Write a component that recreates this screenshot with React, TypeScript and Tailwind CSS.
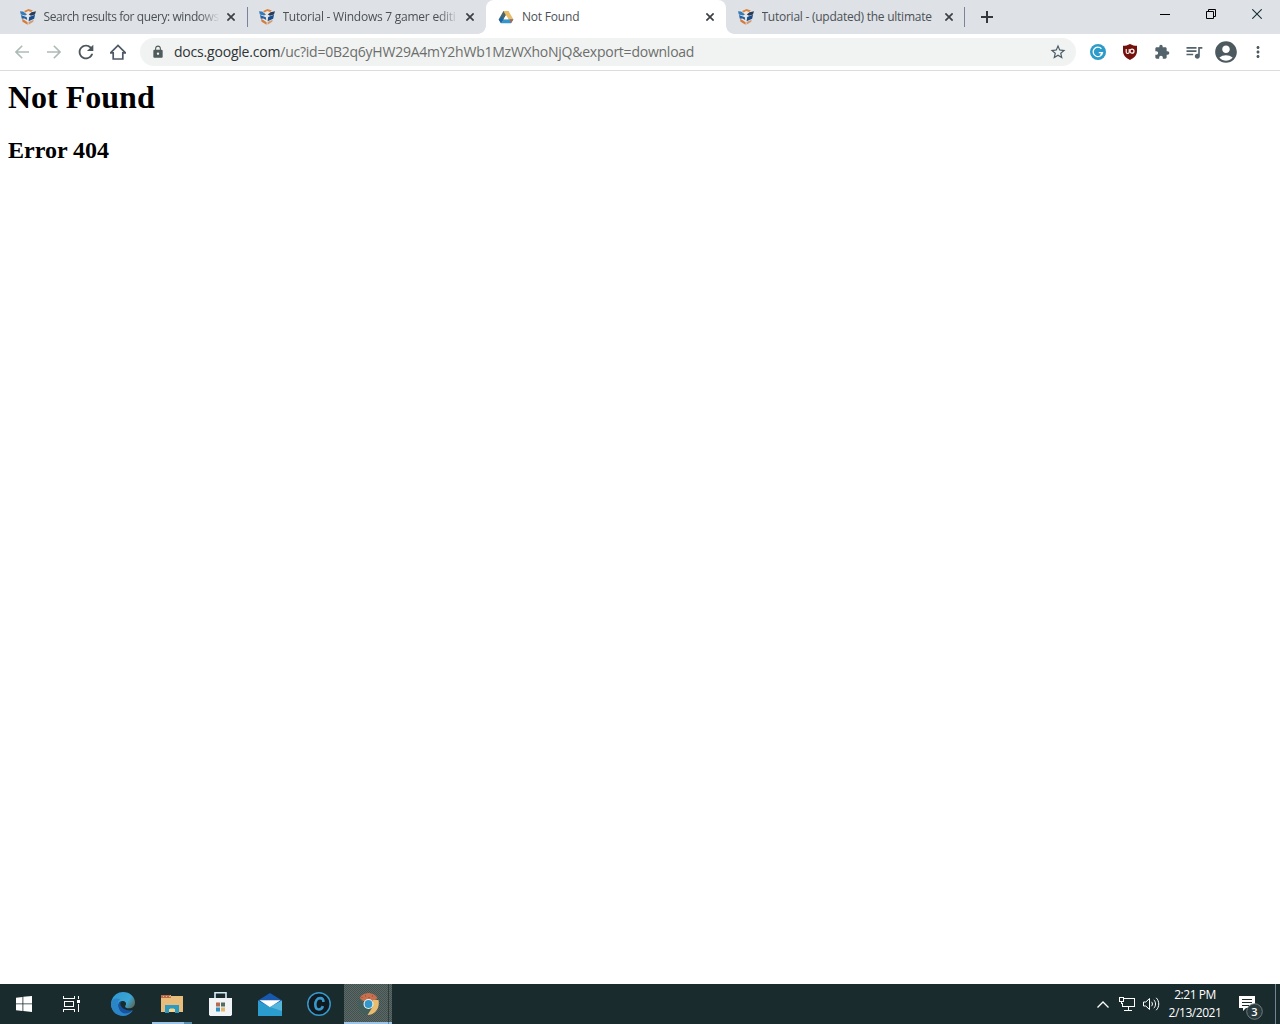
import type { ReactNode } from 'react';
import {
  MdAccountCircle,
  MdExtension,
  MdLock,
  MdMoreVert,
  MdQueueMusic,
  MdRefresh,
  MdStarBorder,
} from 'react-icons/md';

const tabs = [
  { title: 'Search results for query: windows', icon: 'forum', active: false, spacing: 'tracking-[-0.42px]' },
  { title: 'Tutorial - Windows 7 gamer editi', icon: 'forum', active: false, spacing: 'tracking-[-0.24px]' },
  { title: 'Not Found', icon: 'drive', active: true, spacing: 'tracking-[-0.2px]' },
  { title: 'Tutorial - (updated) the ultimate', icon: 'forum', active: false, spacing: 'tracking-[-0.25px]' },
];

function ForumIcon() {
  return (
    <svg width="16" height="16" viewBox="0 0 16 16">
      <path d="M0 2.5 4 .8 8.5 0 12.500.9 16 2.400 13.700 12.500 8.300 16 2.500 12.800z" fill="#e9e6e4" />
      <path d="M4 2 8.500 0 13 1.400 11 3 8.200 2 5.500 3.600z" fill="#d98545" />
      <path d="M0 2.200 3.200 2.400 7 5.400 5 6.600.8 5.600z" fill="#347bb8" />
      <path d="M16 2.300 11.500 3.200 8.800 5.400 11 6.700l4-1.200z" fill="#263c5c" />
      <path d="M1 6 6.800 8.200 7.200 11 4.500 9.600 1.800 9.800z" fill="#2260a5" />
      <path d="M15 5.800 9.200 8 8.600 12.200 14.200 9.800z" fill="#174d8d" />
      <path d="M2 10 4 10.800 7.600 13.200V15.700L2.500 12.800z" fill="#d57b3e" />
      <path d="M8.500 13 13.700 10.800 13.300 12.700 8.500 15.700z" fill="#cf9b74" />
    </svg>
  );
}

function DriveIcon() {
  return (
    <svg width="16" height="16" viewBox="0 0 16 16">
      <path d="M5.4 2h5.1L5 11.2 3 14.2.7 10.4z" fill="#4d6768" />
      <path d="M5.4 2h5.1l5 8.5h-5.1z" fill="#e9bd67" />
      <path d="M5.6 10.3h9.7L13 14.3H3.1z" fill="#3695c9" />
      <path d="M.7 10.4 3 14.3l2.6-4-1.6-3z" fill="#1868a4" />
      <path d="m12 10.3 3.4.1-2.4 3.9z" fill="#bb6148" />
      <path d="m8 6.2 2.4 4.1H5.6z" fill="#fff" />
    </svg>
  );
}

function Cross({ color }: { color: string }) {
  return (
    <svg width="8" height="8" viewBox="0 0 8 8" stroke={color} strokeWidth="1.7">
      <path d="m.4.4 7.2 7.2M7.6.4.4 7.6" />
    </svg>
  );
}

function TabStrip() {
  return (
    <div className="flex h-[34px] bg-[#dee1e6] pl-2">
      {tabs.map((tab, i) => (
        <div
          key={i}
          className={
            tab.active
              ? 'relative flex h-[34px] w-[240px] items-center rounded-t-lg bg-white px-3'
              : 'relative flex h-[34px] w-[239px] items-center pl-[11.5px] pr-3'
          }
        >
          {tab.icon === 'forum' ? <ForumIcon /> : <DriveIcon />}
          <div
            className={
              'ml-2 w-[176px] overflow-hidden whitespace-nowrap text-[12px] leading-4 text-[#4b5155] ' +
              (tab.active || i === 3 ? '' : '[mask-image:linear-gradient(to_right,black_88%,transparent)] ') +
              tab.spacing
            }
          >
            {tab.title}
          </div>
          <div className="ml-auto">
            <Cross color="#3c4043" />
          </div>
          {i === 0 && <span className="absolute -right-px top-[7px] h-5 w-px bg-[#7b829c]" />}
          {i === 3 && <span className="absolute right-0 top-[7px] h-5 w-px bg-[#7b829c]" />}
          {tab.active && (
            <>
              <span className="absolute -left-2 bottom-0 size-2 bg-[radial-gradient(circle_at_0_0,#dee1e6_7.5px,white_8px)]" />
              <span className="absolute -right-2 bottom-0 size-2 bg-[radial-gradient(circle_at_100%_0,#dee1e6_7.5px,white_8px)]" />
            </>
          )}
        </div>
      ))}
      <div className="flex w-11 items-center justify-center">
        <svg width="12" height="12" viewBox="0 0 12 12" stroke="#34383c" strokeWidth="2">
          <path d="M6 0v12M0 6h12" />
        </svg>
      </div>
      <div className="ml-auto flex h-7 items-center">
        <div className="flex w-[46px] justify-center">
          <span className="h-px w-[10px] bg-black" />
        </div>
        <div className="flex w-[46px] justify-center">
          <svg width="10" height="10" viewBox="0 0 10 10" fill="none" stroke="#000">
            <path d="M.5 2.5h7v7h-7zM2.5 2.5v-2h7v7h-2" />
          </svg>
        </div>
        <div className="flex w-[46px] justify-center">
          <svg width="10" height="10" viewBox="0 0 10 10" stroke="#123036" strokeWidth="1.1">
            <path d="m.3.3 9.400 9.400M9.700.3.3 9.700" />
          </svg>
        </div>
      </div>
    </div>
  );
}

function NavButton({ children }: { children: ReactNode }) {
  return <div className="flex size-8 items-center justify-center">{children}</div>;
}

function Toolbar() {
  return (
    <div className="flex h-[37px] items-center border-b border-[#dcdcde] bg-white pl-[6px] text-[#53636b]">
      <NavButton>
        <svg width="14" height="14" viewBox="0 0 14 14" fill="none" stroke="#aebbb5" strokeWidth="1.6">
          <path d="M14 7H1M7.2.8 1 7l6.2 6.2" />
        </svg>
      </NavButton>
      <NavButton>
        <svg width="14" height="14" viewBox="0 0 14 14" fill="none" stroke="#aebbb5" strokeWidth="1.6">
          <path d="M0 7h13M6.8.8 13 7l-6.2 6.2" />
        </svg>
      </NavButton>
      <NavButton>
        <MdRefresh size={22} color="#4d565b" />
      </NavButton>
      <NavButton>
        <svg width="16" height="16" viewBox="0 0 16 16" fill="none" stroke="#4f5865" strokeWidth="1.7">
          <path d="M.8 8.7 8 1.4l7.2 7.3M0 8.8h3.2V15h9.6V8.8H16" />
        </svg>
      </NavButton>
      <div className="ml-[6px] flex h-7 w-[936px] items-center rounded-full bg-[#f1f3f2] pl-[11px] pr-[9px]">
        <MdLock size={14} color="#4f5c5b" />
        <div className="ml-[9px] whitespace-nowrap text-[14px] leading-5 text-[#6c6e6c]">
          <span className="tracking-[-0.2px] text-[#2d3437]">docs.google.com</span>
          <span className="tracking-[-0.240px]">/uc?id=0B2q6yHW29A4mY2hWb1MzWXhoNjQ&amp;export=download</span>
        </div>
        <MdStarBorder className="ml-auto" size={18} color="#4b5c68" />
      </div>
      <div className="ml-[6px] flex items-center">
        <NavButton>
          <svg width="16" height="16" viewBox="0 0 16 16" fill="none">
            <circle cx="8" cy="8" r="8" fill="#2c9bca" />
            <path d="M11.4 4.8A4.7 4.7 0 1 0 12.5 8.6H8.8M12.5 8.6l-2 2.3" stroke="#fff" strokeWidth="1.3" />
          </svg>
        </NavButton>
        <NavButton>
          <svg width="16" height="16" viewBox="0 0 16 16" fill="none">
            <path d="M8 0c2.300 1.300 4.500 1.800 7 1.800V7c0 4-2.500 6.700-7 9-4.500-2.300-7-5-7-9V1.800C3.500 1.800 5.700 1.300 8 0z" fill="#75110c" />
            <path d="M4.200 5v3.200c0 1.700 3 1.700 3 0V5" stroke="#fff" strokeWidth="1.100" />
            <circle cx="10" cy="7.200" r="2" stroke="#fff" strokeWidth="1.200" />
          </svg>
        </NavButton>
        <NavButton>
          <MdExtension size={16} />
        </NavButton>
        <NavButton>
          <MdQueueMusic size={20} />
        </NavButton>
        <NavButton>
          <MdAccountCircle size={26} color="#4c595e" />
        </NavButton>
        <NavButton>
          <MdMoreVert size={18} color="#4c595e" />
        </NavButton>
      </div>
    </div>
  );
}

function TaskButton({ children, className = '' }: { children: ReactNode; className?: string }) {
  return <div className={'relative flex h-10 w-[49px] items-center justify-center ' + className}>{children}</div>;
}

function Taskbar() {
  return (
    <div className="flex h-10 items-center bg-[#1a2b2e] text-white">
      <div className="flex w-12 justify-center">
        <svg width="16" height="16" viewBox="0 0 16 16" fill="#fff">
          <path d="M0 1.800 6.500.900v6.600H0zM7.300.8 16 0v7.500H7.300zM0 8.300h6.500v6.800L0 14.200zM7.300 8.300H16V16l-8.700-.9z" />
        </svg>
      </div>
      <div className="flex w-[47px] justify-center">
        <svg width="17" height="16" viewBox="0 0 17 16" fill="none" stroke="#fff" shapeRendering="crispEdges">
          <path d="M.5 0v2.500h11V0M.5 16v-2.500h11V16M1.500 5.500h9v5h-9zM15.500 0v3M15.500 8v8" />
          <path d="M14 4h3v3h-3z" fill="#fff" stroke="none" />
        </svg>
      </div>
      <TaskButton className="ml-[3px]">
        <svg width="24" height="24" viewBox="0 0 24 24">
          <defs>
            <linearGradient id="edgeTop" x1="0" y1="0" x2="1" y2="0.600">
              <stop offset="0.300" stopColor="#349cd3" />
              <stop offset="0.700" stopColor="#3aa6d4" />
              <stop offset="0.950" stopColor="#58716b" />
            </linearGradient>
          </defs>
          <path d="M12 0C19 0 24 5 24 10.500c0 3.600-2.600 5.800-6 5.800-3.200 0-4.500-1.500-3.500-2.800 1.200-1.600.4-4.500-2.500-4.500-4 0-5.500 4-4 8L5 21.700A12 12 0 0 1 12 0z" fill="url(#edgeTop)" />
          <path d="M.1 11C1 6.500 6 5.500 9.500 7.500c-3 1.500-3.500 5-1.500 8 2.500 3.800 9 5 14 2.700C19.500 22 16 24 12 24 5 24-.5 18 .1 11z" fill="#2b86c8" />
          <path d="M8.200 10C6.500 13 7.500 18 11 20.500c3.500 2.300 7.500.5 10.500-2C18 19 12.500 18 10 14c-1-1.500-1-3.500.4-4.700z" fill="#1753a4" />
        </svg>
      </TaskButton>
      <TaskButton>
        <svg width="22" height="18" viewBox="0 0 22 18">
          <path d="M0 0h10v1h12v16H0z" fill="#e8bd7b" />
          <path d="M0 0h9l1 3H0z" fill="#bc6948" />
          <path d="M2 1h1v1H2zM5 1h1v1H5zM8 1h1v1H8z" fill="#f1b788" />
          <path d="M4 10h14v8h-4v-3.500H8V18H4z" fill="#2b9bc4" />
          <path d="M8 18v-4h1.500v-1h1v1h1v-1h1v1H14v3H8z" fill="#f5d58e" />
        </svg>
        <span className="absolute bottom-0 left-[5px] h-[2px] w-8 bg-[#9dc4e5]" />
        <span className="absolute bottom-0 left-[37px] h-[2px] w-2 bg-[#578da9]" />
      </TaskButton>
      <TaskButton>
        <svg width="23" height="24" viewBox="0 0 23 24">
          <path d="M6 7V.8h11V7" fill="none" stroke="#d6edf8" strokeWidth="1.600" />
          <path d="M0 6h23v16.500L22 24H1L0 22.500z" fill="#f0f4f7" />
          <path d="M7 10.500h4v4H7z" fill="#b66b4c" />
          <path d="M12 10.500h4v4h-4z" fill="#536b61" />
          <path d="M7 15.500h4v4H7z" fill="#2b92c3" />
          <path d="M12 15.500h4v4h-4z" fill="#e5b76f" />
        </svg>
      </TaskButton>
      <TaskButton>
        <svg width="24" height="23" viewBox="0 0 24 23">
          <path d="M0 7.500 12 0l12 7.500V13H0z" fill="#1959ad" />
          <path d="M0 7.500 12 14l12-6.500V23H0z" fill="#2a9dce" />
          <path d="M1.500 7.200h21L12 14.200z" fill="#fff" />
          <path d="M24 7.500V18L12 14z" fill="#55b5db" />
        </svg>
      </TaskButton>
      <TaskButton>
        <svg width="24" height="24" viewBox="0 0 24 24" fill="none" stroke="#3799ca">
          <circle cx="12" cy="12" r="11.200" fill="#101a20" strokeWidth="1.500" />
          <path d="M16.400 10c.2-2.700-1-3.900-3.200-3.900-3 0-4.900 2.800-4.900 6.500 0 3.200 1.200 4.900 3.600 4.900 2.100 0 3.300-1.200 4-3.400" strokeWidth="2.600" />
        </svg>
      </TaskButton>
      <div className="relative ml-px flex h-10 w-12 items-center bg-[#4d5d5a] bg-[conic-gradient(#5b6863_25%,#435250_0_50%,#5b6863_0_75%,#435250_0)] bg-[length:2px_2px] pl-[14px]">
        <svg width="21" height="22" viewBox="0 0 21 22">
          <path d="M1.600 5A10.500 10.500 0 0 1 19.500 5L16 8H5z" fill="#c86f4d" />
          <path d="M1.600 5A11 11 0 0 0 10 22l3-6-7-4z" fill="#435f5b" />
          <path d="M15 7h5.500C22 14 18 22 9.500 22l5-8z" fill="#e8bd70" />
          <path d="M3.500 4h1v1h-1zM7 2.500h1v1H7zM10.500 4h1v1h-1zM14 2.500h1v1h-1z" fill="#914630" />
          <circle cx="10.500" cy="11" r="5" fill="#eef3f2" />
          <circle cx="10.500" cy="11" r="3.900" fill="#3196ca" />
        </svg>
        <span className="absolute right-[3px] top-0 h-full w-px bg-[#2c3b3d]" />
        <span className="absolute bottom-0 left-0 h-[2px] w-full bg-[#9dc4e5]" />
        <span className="absolute bottom-0 right-[3px] h-[2px] w-px bg-[#578da9]" />
      </div>

      <div className="ml-auto flex h-10 items-center">
        <svg width="12" height="7" viewBox="0 0 12 7" fill="none" stroke="#fff" strokeWidth="1.300">
          <path d="m.5 6.500 5.500-5.500 5.500 5.500" />
        </svg>
        <svg className="ml-[10px]" width="16" height="14" viewBox="0 0 16 14" fill="none" stroke="#fff" shapeRendering="crispEdges">
          <path d="M5 1.500h10.500v8H3.500V7M9.500 10v3M5 13.500h8M.5.500h4v4h-4zM2.500 4v3M2 6.500h2" />
        </svg>
        <svg className="ml-2" width="17" height="14" viewBox="0 0 17 14" fill="none" stroke="#fff">
          <path d="M.5 5v4h2.300L6.500 12.500v-11L2.800 5zM8.500 4.800c1.200 1.200 1.200 3.200 0 4.400M10.800 2.800c2.300 2.300 2.300 6.100 0 8.400M13.200.8c3.400 3.400 3.400 9 0 12.400" />
        </svg>
        <div className="ml-[5px] w-[60px] whitespace-nowrap text-center text-[12px] leading-[18px] tracking-[-0.450px]">
          <div>2:21 PM</div>
          <div>2/13/2021</div>
        </div>
        <svg className="ml-[14px] mt-2" width="24" height="24" viewBox="0 0 24 24">
          <path d="M0 0h16v12H7l-3 3v-3H0z" fill="#fff" />
          <path d="M3 3.500h10M3 6.500h10M3 9.500h7" stroke="#1a2b2e" />
          <circle cx="15.500" cy="15.500" r="7.800" fill="#2a393c" stroke="#82908f" strokeWidth="0.800" />
          <text x="15.500" y="19.500" textAnchor="middle" fontSize="11" fontWeight="600" fill="#fff">3</text>
        </svg>
        <span className="ml-3 mr-1 h-10 w-px bg-[#728596]" />
      </div>
    </div>
  );
}

export default function App() {
  return (
    <div className="flex h-[1024px] w-[1280px] flex-col overflow-hidden bg-white font-['Open_Sans','Noto_Sans',sans-serif]">
      <TabStrip />
      <Toolbar />
      <main className="flex-1 px-2 pt-[8px] font-['Liberation_Serif',serif] font-bold text-black">
        <h1 className="text-[32px] leading-[37px]">Not Found</h1>
        <h2 className="mt-[20px] text-[24px] leading-[28px]">Error 404</h2>
      </main>
      <Taskbar />
    </div>
  );
}
